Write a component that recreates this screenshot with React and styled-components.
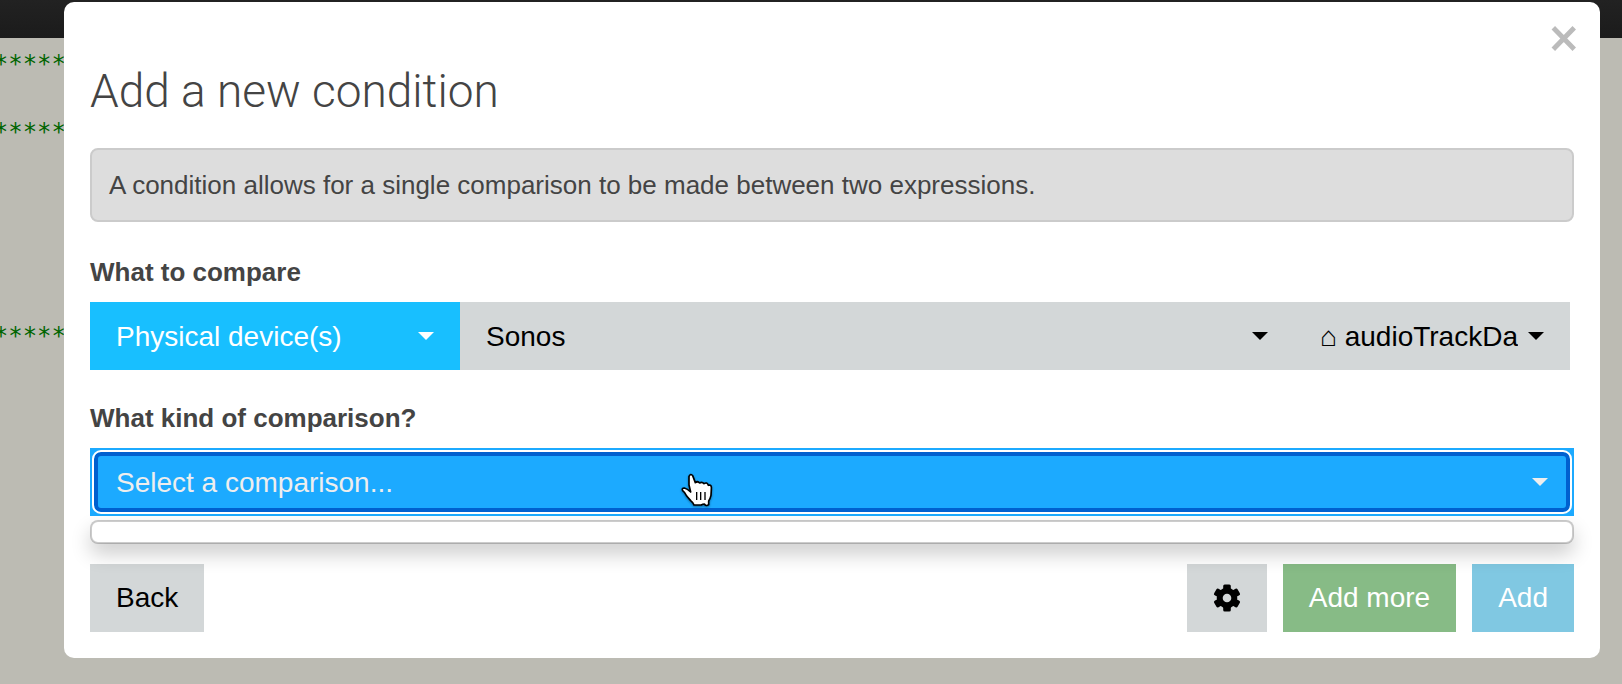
import React, { useState } from 'react';
import styled, { createGlobalStyle, css } from 'styled-components';

const GlobalStyle = createGlobalStyle`
  * {
    box-sizing: border-box;
  }

  body {
    margin: 0;
    background: #bcbbb3;
    color: #444;
    font-family: 'Liberation Sans', Arial, sans-serif;
    font-size: 26px;
  }
`;

const Page = styled.div`
  position: relative;
  min-height: 100vh;
  overflow: hidden;
`;

const NavBar = styled.header`
  height: 38px;
  background: linear-gradient(#222, #1b1b1b);
`;

const Code = styled.pre`
  display: flex;
  flex-direction: column;
  align-items: flex-end;
  width: 66px;
  margin: 0;
  padding-top: 9px;
  color: #006400;
  font-family: 'DejaVu Sans Mono', monospace;
  font-size: 24px;
  line-height: 34px;
`;

const CodeLine = styled.span`
  height: 34px;
`;

const Modal = styled.section`
  position: absolute;
  top: 2px;
  left: 64px;
  right: 22px;
  padding: 22px 26px 26px;
  background: #fff;
  border-radius: 10px;
`;

const CloseButton = styled.button`
  display: block;
  width: 28px;
  height: 28px;
  margin: 0 -4px 0 auto;
  padding: 0;
  border: none;
  background: none;
  color: #bbb;
  cursor: pointer;

  svg {
    display: block;
  }
`;

const Title = styled.h1`
  margin: 9px 0 27px;
  font-family: Roboto, 'Liberation Sans', sans-serif;
  font-size: 46px;
  font-weight: 300;
  line-height: 60px;
`;

const Callout = styled.p`
  margin: 0 0 36px;
  padding: 20px 17px;
  border: 2px solid #cbcbcb;
  border-radius: 8px;
  background: #ddd;
  line-height: 30px;
`;

const Field = styled.div`
  margin-bottom: 34px;
`;

const Label = styled.label`
  display: block;
  margin-bottom: 16px;
  font-weight: bold;
  line-height: 28px;
`;

const SelectRow = styled.div`
  display: flex;
  margin-right: 4px;
`;

const tones = {
  primary: css`
    background: #18bfff;
    color: #fff;
  `,
  active: css`
    background: #1caaff;
    color: #eee;
  `,
  plain: css`
    background: #d3d7d8;
    color: #000;
  `,
  success: css`
    background: #87bb86;
    color: #fff;
  `,
  info: css`
    background: #80c8e2;
    color: #fff;
  `,
};

const SelectBox = styled.div`
  position: relative;
  flex: ${({ $width }) => ($width ? `0 0 ${$width}` : '1')};
  min-width: 0;
  ${({ $tone }) => tones[$tone]}

  &::after {
    content: '';
    position: absolute;
    top: 30px;
    right: 26px;
    border: 8px solid transparent;
    border-top-color: currentColor;
    border-bottom: none;
    pointer-events: none;
  }
`;

const Select = styled.select`
  display: block;
  width: 100%;
  height: 68px;
  padding: 0 52px 0 26px;
  border: none;
  border-radius: 0;
  outline: none;
  appearance: none;
  background: none;
  color: inherit;
  font-family: inherit;
  font-size: 28px;
  cursor: pointer;
`;

const FocusRing = styled.span`
  position: absolute;
  inset: 2px;
  border: 2px solid #fff;
  border-radius: 9px;
  box-shadow: inset 0 0 0 4px #0060cf;
  pointer-events: none;
`;

const Menu = styled.ul`
  position: absolute;
  z-index: 1;
  top: 100%;
  left: 0;
  right: 0;
  margin: 4px 0 0;
  padding: 10px 0;
  list-style: none;
  border: 2px solid rgba(0, 0, 0, 0.2);
  border-radius: 8px;
  background: #fff;
  background-clip: padding-box;
  box-shadow: 0 10px 20px rgba(0, 0, 0, 0.2);
`;

const Pointer = styled.svg`
  position: absolute;
  z-index: 2;
  top: 24px;
  left: 590px;
  pointer-events: none;
  filter: drop-shadow(0 1px 1px rgba(0, 0, 0, 0.4));
`;

const Footer = styled.footer`
  display: flex;
  gap: 16px;
  margin-top: 48px;
`;

const Button = styled.button`
  display: flex;
  align-items: center;
  height: 68px;
  padding: 0 26px;
  border: none;
  font-family: inherit;
  font-size: 28px;
  cursor: pointer;
  ${({ $tone }) => tones[$tone]}

  &:first-child {
    margin-right: auto;
  }
`;

// line numbers in the editor that hold a comment divider
const dividers = [0, 2, 8];

const CloseIcon = () => (
  <svg width="28" height="28" viewBox="0 0 28 28" aria-hidden="true">
    <path
      d="M4 4.5 23.5 24.5M23.5 4.5 4 24.5"
      stroke="currentColor"
      strokeWidth="5.4"
      strokeLinecap="square"
      strokeLinejoin="round"
      transform="translate(1.4 1.4) scale(0.9)"
    />
  </svg>
);

const GearIcon = () => (
  <svg width="28" height="28" viewBox="0 0 28 28" aria-hidden="true">
    <g fill="currentColor">
      {[0, 60, 120].map((angle) => (
        <rect key={angle} x="10.2" y="0.5" width="7.6" height="27" rx="1.5" transform={`rotate(${angle} 14 14)`} />
      ))}
      <circle cx="14" cy="14" r="10.3" />
    </g>
    <circle cx="14" cy="14" r="4.3" fill="#d3d7d8" />
  </svg>
);

const HandPointer = () => (
  <Pointer width="34" height="38" viewBox="120 96 102 114" aria-hidden="true">
    <path
      d="M147 109Q152 99 158 107L166 128Q173 122 179 129Q186 124 192 131Q201 125 205 136Q216 132 214 148L213 166Q210 178 206 183L206 194Q198 200 193 192Q188 192 184 195L162 195Q160 188 152 182L140 168Q136 158 128 152Q124 144 133 144Q142 146 152 156L147 135Z"
      fill="#fff"
      stroke="#000"
      strokeWidth="5"
      strokeLinejoin="round"
    />
    <path d="M170 156V180M182 156V180M195 156V180" stroke="#000" strokeWidth="4" />
  </Pointer>
);

const App = () => {
  const [source, setSource] = useState('device');
  const [comparison, setComparison] = useState('');

  return (
    <>
      <GlobalStyle />
      <Page>
        <NavBar />
        <Code>
          {Array.from({ length: 9 }, (_, line) => (
            <CodeLine key={line}>{dividers.includes(line) ? '*****' : ''}</CodeLine>
          ))}
        </Code>

        <Modal role="dialog" aria-labelledby="title">
          <CloseButton type="button" aria-label="Close">
            <CloseIcon />
          </CloseButton>
          <Title id="title">Add a new condition</Title>
          <Callout>A condition allows for a single comparison to be made between two expressions.</Callout>

          <Field>
            <Label htmlFor="source">What to compare</Label>
            <SelectRow>
              <SelectBox $tone="primary" $width="25%">
                <Select id="source" value={source} onChange={(e) => setSource(e.target.value)}>
                  <option value="device">Physical device(s)</option>
                </Select>
              </SelectBox>
              <SelectBox $tone="plain">
                <Select aria-label="Device" defaultValue="sonos">
                  <option value="sonos">Sonos</option>
                </Select>
              </SelectBox>
              <SelectBox $tone="plain" $width="276px">
                <Select aria-label="Attribute" defaultValue="audioTrackData">
                  <option value="audioTrackData">⌂ audioTrackData</option>
                </Select>
              </SelectBox>
            </SelectRow>
          </Field>

          <Label htmlFor="comparison">What kind of comparison?</Label>
          <SelectBox $tone="active">
            <Select id="comparison" value={comparison} onChange={(e) => setComparison(e.target.value)}>
              <option value="">Select a comparison...</option>
            </Select>
            <FocusRing />
            <Menu />
            <HandPointer />
          </SelectBox>

          <Footer>
            <Button type="button" $tone="plain">Back</Button>
            <Button type="button" $tone="plain" aria-label="Options">
              <GearIcon />
            </Button>
            <Button type="button" $tone="success">Add more</Button>
            <Button type="button" $tone="info">Add</Button>
          </Footer>
        </Modal>
      </Page>
    </>
  );
};

export default App;
